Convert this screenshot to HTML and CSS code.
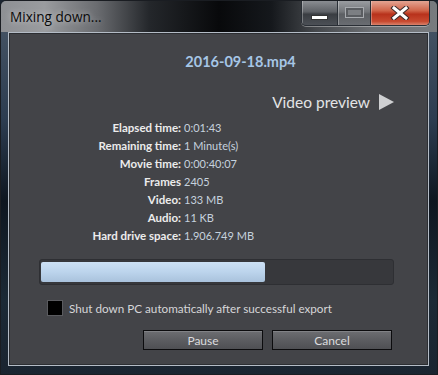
FILE: index.html
```html
<!DOCTYPE html>
<html>
<head>
<meta charset="utf-8">
<link rel="stylesheet" href="styles.css">
</head>
<body>
<div class="window">
  <div class="titlebar">
    <span class="title">Mixing down...</span>
    <div class="caption">
      <div class="cbtn min"><span class="min-glyph"></span></div>
      <div class="cbtn max"><span class="max-glyph"></span></div>
      <div class="cbtn close">
        <svg width="20" height="14" viewBox="0 0 20 14">
          <path d="M4 2 L16 12 M16 2 L4 12" stroke="#3a2a2a" stroke-width="5" stroke-linecap="square"/>
          <path d="M4 2 L16 12 M16 2 L4 12" stroke="#ffffff" stroke-width="3" stroke-linecap="square"/>
        </svg>
      </div>
    </div>
  </div>
  <div class="client">
    <div class="filename">2016-09-18.mp4</div>
    <div class="preview">
      <span>Video preview</span>
      <svg class="play" width="15" height="16" viewBox="0 0 15 16"><polygon points="0,0 15,8 0,16" fill="#cfd0d2"/></svg>
    </div>
    <div class="stats">
      <span class="lbl">Elapsed time:</span><span class="val">0:01:43</span>
      <span class="lbl">Remaining time:</span><span class="val">1 Minute(s)</span>
      <span class="lbl">Movie time:</span><span class="val">0:00:40:07</span>
      <span class="lbl">Frames</span><span class="val">2405</span>
      <span class="lbl">Video:</span><span class="val">133 MB</span>
      <span class="lbl">Audio:</span><span class="val">11 KB</span>
      <span class="lbl">Hard drive space:</span><span class="val">1.906.749 MB</span>
    </div>
    <div class="progress"><div class="fill" style="width: 224px"></div></div>
    <label class="check"><span class="box"></span><span>Shut down PC automatically after successful export</span></label>
    <div class="buttons">
      <button class="btn">Pause</button>
      <button class="btn">Cancel</button>
    </div>
  </div>
</div>
</body>
</html>
```
FILE: styles.css
```css
html, body { margin: 0; padding: 0; }
body { width: 438px; height: 375px; overflow: hidden; background: #1b2430; }
.window {
  width: 438px; height: 375px; box-sizing: border-box;
  border: 1px solid #1a1d22; border-radius: 6px 6px 0 0;
  background:
    linear-gradient(to bottom, #4a5868 0px, #2c3c50 120px, #0e1620 200px, #1c2a36 300px, #1a2430 375px);
  display: flex; flex-direction: column;
}
.titlebar {
  height: 31px; display: flex; align-items: flex-start;
  background: linear-gradient(to right, #8e9094 0%, #9a9c9f 10%, #6a6c70 22%, #24272b 34%, #08090b 50%, #15181c 62%, #44474b 72%, #6c6f73 85%, #787b7f 100%);
  border-radius: 5px 5px 0 0;
}
.title {
  font-family: "Open Sans", "DejaVu Sans", sans-serif; font-size: 13.6px; color: #0a0a0a;
  margin: 6px 0 0 9px; line-height: 20px;
  text-shadow: 0 0 6px rgba(255,255,255,0.6);
}
.caption {
  margin-left: auto; margin-right: 7px; margin-top: 0px;
  display: flex; height: 24px;
  border: 1px solid #2a2f36; border-top: none; border-radius: 0 0 5px 5px;
  overflow: hidden; box-shadow: 0 1px 0 rgba(255,255,255,0.35);
}
.cbtn { height: 24px; display: flex; align-items: center; justify-content: center; box-sizing: border-box; }
.min { width: 36px; background: linear-gradient(to bottom, #8a8d92 0%, #5e6166 45%, #3a3d42 55%, #4c5056 100%); border-right: 1px solid #2a2f36; box-shadow: inset 1px 0 0 rgba(255,255,255,0.3); }
.max { width: 33px; background: linear-gradient(to bottom, #9a9da1 0%, #73767a 45%, #5c5f63 55%, #6a6d72 100%); border-right: 1px solid #2a2f36; box-shadow: inset 1px 0 0 rgba(255,255,255,0.3); }
.close { width: 58px; background: linear-gradient(to bottom, #e3a493 0%, #d0654a 40%, #b8321c 55%, #c84a30 85%, #d9826c 100%); box-shadow: inset 1px 0 0 rgba(255,255,255,0.3); }
.min-glyph { width: 15px; height: 3px; background: #ffffff; border: 1px solid #333; margin-top: 8px; }
.max-glyph { width: 13px; height: 5px; border: 2px solid #5a5d61; outline: 1px solid #a8abaf; background: #7c7f83; margin-top: -2px; }
.client {
  margin: 0 8px 8px 7px; flex: 1;
  border: 1px solid #b4bcc6; background: #434448;
  display: flex; flex-direction: column;
  font-family: Lato, "Open Sans", sans-serif;
  box-shadow: inset 0 0 0 1px #2c2e32;
}
.filename {
  margin-top: 20px; text-align: center; line-height: 18px;
  font-size: 14.5px; font-weight: bold; color: #a6c6e6; padding-left: 44px;
}
.preview {
  margin-top: 21px; height: 20px; display: flex; justify-content: flex-end; align-items: center;
  padding-right: 34px; color: #e4e4e6; font-size: 15.5px; gap: 9px;
}
.preview span { line-height: 20px; }
.stats {
  margin-top: 7px; display: grid; grid-template-columns: 172px 1fr; column-gap: 3px;
  line-height: 18px;
}
.lbl { text-align: right; font-weight: bold; color: #ececec; font-size: 11.5px; }
.val { color: #c6d2de; font-size: 11px; }
.progress {
  margin: 14px 0 0 30px; width: 355px; height: 26px; box-sizing: border-box;
  border: 1px solid #2e2f33; border-radius: 3px; background: #37383c; padding: 2px 1px;
}
.fill { height: 100%; border-radius: 2px; background: linear-gradient(to bottom, #cde1f5 0%, #bcd4ec 50%, #a9c2dc 100%); }
.check {
  margin: 15px 0 0 38px; display: flex; align-items: center; gap: 6px;
  color: #d6d6d8; font-size: 11.7px; height: 16px;
}
.box { width: 14px; height: 14px; background: #000; border: 1px solid #5a5b5f; }
.buttons { margin-top: 14px; display: flex; justify-content: flex-end; gap: 9px; padding-right: 36px; }
.btn {
  width: 120px; height: 20px; box-sizing: border-box; border: 1px solid #0c0c0e;
  background: linear-gradient(to bottom, #6d6e72 0%, #5c5d61 50%, #4f5054 100%);
  color: #dcdcde; font-family: Lato, "Open Sans", sans-serif; font-size: 12px; padding: 0;
  box-shadow: inset 0 1px 0 rgba(255,255,255,0.15);
}
```
